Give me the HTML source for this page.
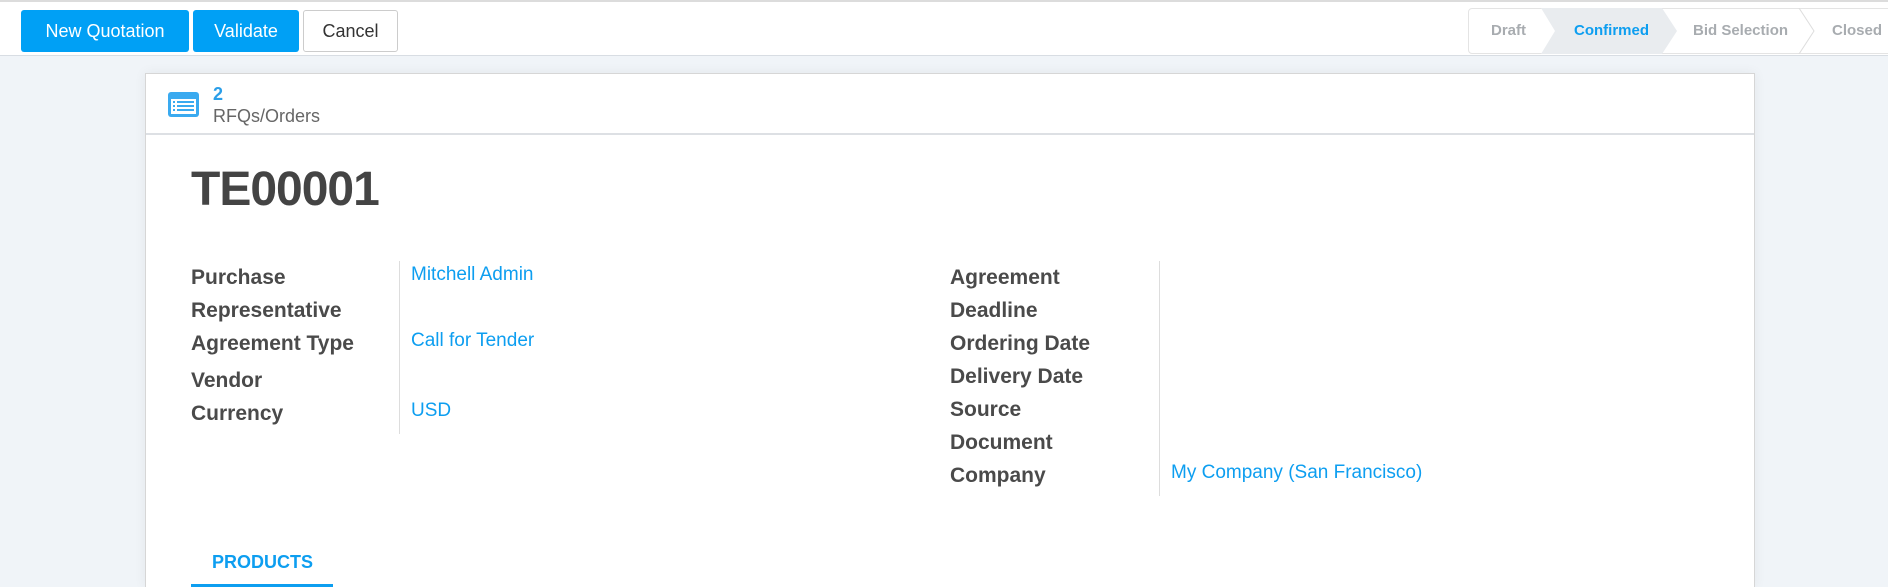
<!DOCTYPE html>
<html><head><meta charset="utf-8"><style>
*{margin:0;padding:0;box-sizing:border-box}
html,body{width:1888px;height:587px;overflow:hidden}
body{background:#f0f4f8;font-family:"Liberation Sans",sans-serif;color:#4c4c4c;position:relative}
.top{position:absolute;left:0;top:0;width:1888px;height:56px;background:#fff;border-top:2px solid #dcdcdc;border-bottom:1px solid #d8dde3}
.btn{position:absolute;top:8px;height:42px;border-radius:3px;font-size:18px;line-height:42px;text-align:center}
.pri{background:#00a0f5;color:#fff}
.sec{background:#fff;border:1px solid #ccc;color:#333;line-height:40px}
.st{position:absolute;top:6px;height:46px;font-size:15px;font-weight:bold;color:#a8acb0;line-height:46px}
.card{position:absolute;left:145px;top:73px;width:1610px;height:514px;background:#fff;border:1px solid #d6d6d6;border-bottom:none;box-shadow:0 0 12px rgba(0,0,0,.06)}
.hd{position:absolute;left:0;top:0;width:100%;height:61px;border-bottom:2px solid #dde0e4}
.l{position:absolute;font-size:21px;font-weight:bold;color:#4a4a4a;line-height:33px}
.v{position:absolute;font-size:19px;color:#0d9ef0;line-height:33px}
.div{position:absolute;width:1px;background:#ddd}
</style></head><body>
<div class="top">
 <div class="btn pri" style="left:21px;width:168px">New Quotation</div>
 <div class="btn pri" style="left:193px;width:106px">Validate</div>
 <div class="btn sec" style="left:303px;width:95px">Cancel</div>
 <div style="position:absolute;left:1468px;top:6px;width:430px;height:46px;border:1px solid #e4e4e4;border-radius:4px"></div>
 <div style="position:absolute;left:1541px;top:6px;width:136px;height:46px;background:#e9ecef;clip-path:polygon(0 0,121px 0,136px 23px,121px 46px,0 46px,14px 23px)"></div>
 <svg style="position:absolute;left:1798px;top:6px" width="20" height="46"><polyline points="1,0 16,23 1,46" fill="none" stroke="#ddd" stroke-width="1"/></svg>
 <div class="st" style="left:1491px">Draft</div>
 <div class="st" style="left:1574px;color:#0d9ef0">Confirmed</div>
 <div class="st" style="left:1693px">Bid Selection</div>
 <div class="st" style="left:1832px">Closed</div>
</div>
<div class="card">
 <div class="hd">
  <svg style="position:absolute;left:22px;top:18px" width="31" height="25" viewBox="0 0 31 25"><rect x="0" y="0" width="31" height="25" rx="3" fill="#3aaaf0"/><rect x="3" y="7" width="25" height="15" fill="#fff"/><g fill="#3aaaf0"><rect x="5" y="9" width="2" height="2"/><rect x="9" y="9" width="17" height="2"/><rect x="5" y="13" width="2" height="2"/><rect x="9" y="13" width="17" height="2"/><rect x="5" y="17" width="2" height="2"/><rect x="9" y="17" width="17" height="2"/></g></svg>
  <div style="position:absolute;left:67px;top:10px;font-size:18px;font-weight:bold;color:#2a9ee8">2</div>
  <div style="position:absolute;left:67px;top:32px;font-size:18px;color:#666">RFQs/Orders</div>
 </div>
 <div style="position:absolute;left:45px;top:88px;font-size:48px;font-weight:bold;color:#444;letter-spacing:-1px">TE00001</div>
 <div class="l" style="left:45px;top:187px">Purchase<br>Representative</div>
 <div class="l" style="left:45px;top:253px">Agreement Type</div>
 <div class="l" style="left:45px;top:290px">Vendor</div>
 <div class="l" style="left:45px;top:323px">Currency</div>
 <div class="div" style="left:253px;top:187px;height:173px"></div>
 <div class="v" style="left:265px;top:184px">Mitchell Admin</div>
 <div class="v" style="left:265px;top:250px">Call for Tender</div>
 <div class="v" style="left:265px;top:320px">USD</div>
 <div class="l" style="left:804px;top:187px">Agreement<br>Deadline<br>Ordering Date<br>Delivery Date<br>Source<br>Document<br>Company</div>
 <div class="div" style="left:1013px;top:187px;height:235px"></div>
 <div class="v" style="left:1025px;top:382px">My Company (San Francisco)</div>
 <div style="position:absolute;left:66px;top:478px;font-size:18px;font-weight:bold;color:#0d9ef0">PRODUCTS</div>
 <div style="position:absolute;left:45px;top:510px;width:142px;height:3px;background:#0d9ef0"></div>
</div>
</body></html>
